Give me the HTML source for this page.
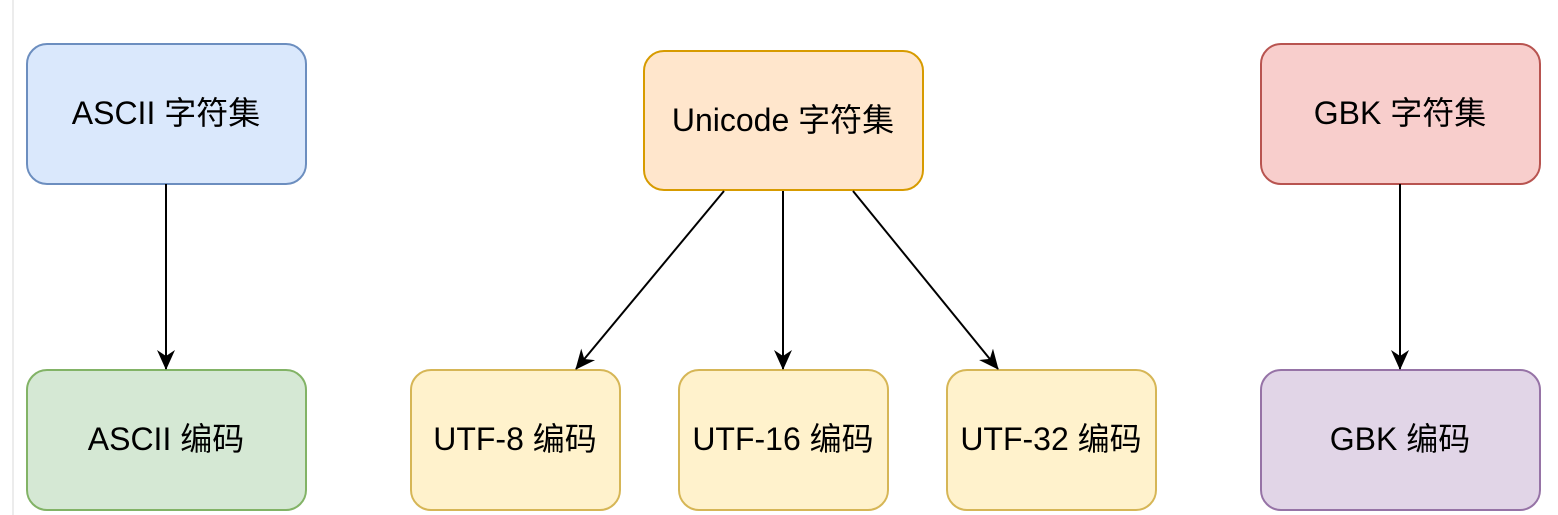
<!DOCTYPE html>
<html><head><meta charset="utf-8"><style>
html,body{margin:0;padding:0;background:#fff;}
svg{display:block}
text{font-family:"Liberation Sans","Noto Sans CJK SC",sans-serif;font-size:32px;fill:#000;text-anchor:middle;dominant-baseline:central}
</style></head><body>
<svg width="1558" height="515" viewBox="0 0 1558 515">
<defs>
<marker id="b" viewBox="0 0 20 20" refX="19" refY="10" markerWidth="20" markerHeight="20" orient="auto" markerUnits="userSpaceOnUse"><path d="M0,1 L20,10 L0,19 L6,10 Z" fill="#000"/></marker></defs>
<line x1="13" y1="0" x2="13" y2="515" stroke="#e6e6e6" stroke-width="1.5"/>
<g stroke-width="2">
<rect x="27" y="44" width="279" height="140" rx="20" fill="#dae8fc" stroke="#6c8ebf"/>
<rect x="27" y="370" width="279" height="140" rx="20" fill="#d5e8d4" stroke="#82b366"/>
<rect x="644" y="51" width="279" height="139" rx="20" fill="#ffe6cc" stroke="#d79b00"/>
<rect x="411" y="370" width="209" height="140" rx="20" fill="#fff2cc" stroke="#d6b656"/>
<rect x="679" y="370" width="209" height="140" rx="20" fill="#fff2cc" stroke="#d6b656"/>
<rect x="947" y="370" width="209" height="140" rx="20" fill="#fff2cc" stroke="#d6b656"/>
<rect x="1261" y="44" width="279" height="140" rx="20" fill="#f8cecc" stroke="#b85450"/>
<rect x="1261" y="370" width="279" height="140" rx="20" fill="#e1d5e7" stroke="#9673a6"/>
</g>
<g stroke="#000" stroke-width="2" marker-end="url(#b)">
<line x1="166" y1="184" x2="166" y2="369"/>
<line x1="724" y1="191" x2="576" y2="369"/>
<line x1="783" y1="191" x2="783" y2="369"/>
<line x1="853" y1="191" x2="998" y2="369"/>
<line x1="1400" y1="184" x2="1400" y2="369"/>
</g>
<text x="166" y="113">ASCII 字符集</text>
<text x="166" y="439">ASCII 编码</text>
<text x="783" y="120">Unicode 字符集</text>
<text x="515" y="439">UTF-8 编码</text>
<text x="783" y="439">UTF-16 编码</text>
<text x="1051" y="439">UTF-32 编码</text>
<text x="1400" y="113">GBK 字符集</text>
<text x="1400" y="439">GBK 编码</text>
</svg>
</body></html>
